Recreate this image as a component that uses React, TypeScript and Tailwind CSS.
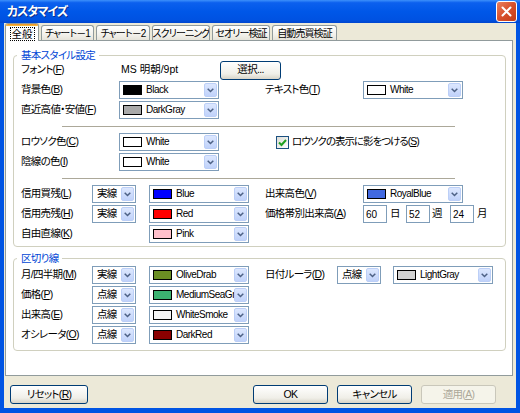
import React from "react";

function Mn({ c }: { c: string }) {
  return (
    <>
      (<span className="underline">{c}</span>)
    </>
  );
}

function Arrow() {
  return (
    <span className="flex h-full w-[13px] shrink-0 items-center justify-center rounded-[2px] border border-[#bccff7] bg-[linear-gradient(to_bottom,#dce7fe,#c0d2fa)]">
      <svg width="7" height="5" viewBox="0 0 7 5">
        <path d="M0.7 0.7 L3.5 3.5 L6.3 0.7" stroke="#4d6185" strokeWidth="1.5" fill="none" />
      </svg>
    </span>
  );
}

function Combo({ swatch, name }: { swatch: string; name: string }) {
  return (
    <div className="flex h-[18px] w-[100px] shrink-0 items-stretch border border-[#7f9db9] bg-white p-[1px]">
      <div className="flex min-w-0 flex-1 items-center overflow-hidden pl-[2px]">
        <span className={`h-[10px] w-[19px] shrink-0 border border-black ${swatch}`} />
        <span className="ml-[4px] whitespace-nowrap text-[10px] leading-none tracking-[-0.5px]">{name}</span>
      </div>
      <Arrow />
    </div>
  );
}

function LineCombo({ value }: { value: string }) {
  return (
    <div className="flex h-[18px] w-[44px] shrink-0 items-stretch border border-[#7f9db9] bg-white p-[1px]">
      <div className="flex flex-1 items-center pl-[3px]">{value}</div>
      <Arrow />
    </div>
  );
}

function NumBox({ v }: { v: string }) {
  return (
    <div className="flex h-[18px] w-[24px] shrink-0 items-center border border-[#7f9db9] bg-white pl-[2px] text-[10px] tracking-normal">
      {v}
    </div>
  );
}

function Btn({ children, w = "w-[75px]", disabled = false }: { children: React.ReactNode; w?: string; disabled?: boolean }) {
  return (
    <div
      className={`flex h-[19px] ${w} items-center justify-center rounded-[3px] border ${
        disabled
          ? "border-[#c9c7ba] bg-[#f5f4ea] text-[#aca899]"
          : "border-[#003c74] bg-[linear-gradient(to_bottom,#ffffff,#f0efe8_70%,#d8d4c8)]"
      }`}
    >
      {children}
    </div>
  );
}

function Group({ title, children, cls }: { title: string; children: React.ReactNode; cls: string }) {
  return (
    <div className={`relative ml-[7px] mr-[6px] rounded-[4px] border border-[#d0d0bf] ${cls}`}>
      <span className="absolute -top-[8px] left-[3px] bg-white px-[4px] leading-[14px] text-[#0046d5]">{title}</span>
      {children}
    </div>
  );
}

function Row({ children }: { children: React.ReactNode }) {
  return <div className="flex h-[20px] items-center">{children}</div>;
}

function Sep() {
  return (
    <div className="flex h-[12px] items-center">
      <div className="ml-[41px] w-[393px] border-t border-[#aca899]" />
    </div>
  );
}

function Tab({ label, w }: { label: string; w: string }) {
  return (
    <div
      className={`flex h-[15px] ${w} items-center justify-center overflow-hidden rounded-t-[3px] border border-b-0 border-[#919b9c] bg-[linear-gradient(to_bottom,#ffffff,#f3f2ec_60%,#e6e4da)] whitespace-nowrap text-[10px] tracking-[-0.9px]`}
    >
      {label}
    </div>
  );
}

export default function App() {
  return (
    <div className="flex h-[413px] w-[520px] flex-col bg-[#0054e3] text-[10.5px] tracking-[-0.7px] text-black [font-family:'Liberation_Sans','Noto_Sans_CJK_JP',sans-serif] [font-feature-settings:'palt']">
      {/* title bar */}
      <div className="flex h-[23px] items-center bg-[linear-gradient(to_bottom,#3d90fb_0%,#0c60ee_12%,#0057e8_50%,#0052e2_85%,#0046cf_100%)] pl-[7px] pr-[3px]">
        <span className="flex-1 text-[12px] font-bold tracking-[-1px] text-white [text-shadow:1px_1px_0_#0b2f8e]">カスタマイズ</span>
        <div className="flex h-[21px] w-[21px] items-center justify-center rounded-[3px] border border-white bg-[linear-gradient(135deg,#e9805f,#d8502c_50%,#c23c18)]">
          <svg width="11" height="11" viewBox="0 0 11 11">
            <path d="M1.5 1.5 L9.5 9.5 M9.5 1.5 L1.5 9.5" stroke="white" strokeWidth="2" strokeLinecap="round" />
          </svg>
        </div>
      </div>

      {/* body */}
      <div className="mx-[4px] flex h-[385px] flex-col bg-[#ece9d8]">
        {/* tabs */}
        <div className="flex h-[17px] items-end gap-[2px] pl-[1px]">
          <div className="relative z-10 -mb-[1px] flex h-[18px] w-[34px] flex-col rounded-t-[3px] border border-b-0 border-[#919b9c] bg-white">
            <div className="h-[2px] rounded-t-[2px] bg-[linear-gradient(to_bottom,#e68b2c,#ffc73c)]" />
            <div className="flex flex-1 items-center justify-center">
              <span className="border border-dotted border-black px-[1px] leading-[12px] tracking-normal">全般</span>
            </div>
          </div>
          <Tab label="チャート－1" w="w-[53px]" />
          <Tab label="チャート－2" w="w-[54px]" />
          <Tab label="スクリーニング" w="w-[58px]" />
          <Tab label="セオリー検証" w="w-[58px]" />
          <Tab label="自動売買検証" w="w-[65px]" />
        </div>

        {/* panel */}
        <div className="ml-[1px] mr-[3px] flex h-[336px] flex-col border border-[#919b9c] bg-white">
          <Group title="基本スタイル設定" cls="mt-[14px] px-[7px] pt-[4px] pb-[2px]">
            <Row>
              <span className="w-[98px]">フォント<Mn c="F" /></span>
              <span className="w-[101px] pl-[2px] tracking-normal">MS 明朝/9pt</span>
              <Btn w="w-[61px]">選択...</Btn>
            </Row>
            <Row>
              <span className="w-[98px]">背景色<Mn c="B" /></span>
              <Combo swatch="bg-black" name="Black" />
              <span className="ml-[46px] w-[98px]">テキスト色<Mn c="T" /></span>
              <Combo swatch="bg-white" name="White" />
            </Row>
            <Row>
              <span className="w-[98px]">直近高値・安値<Mn c="F" /></span>
              <Combo swatch="bg-[#a9a9a9]" name="DarkGray" />
            </Row>
            <Sep />
            <Row>
              <span className="w-[98px]">ロウソク色<Mn c="C" /></span>
              <Combo swatch="bg-white" name="White" />
              <span className="ml-[57px] flex h-[13px] w-[13px] items-center justify-center border border-[#1c5180] bg-[linear-gradient(135deg,#dcdcd7,#ffffff)]">
                <svg width="9" height="9" viewBox="0 0 9 9">
                  <path d="M1 4.5 L3.5 7 L8 2" stroke="#21a121" strokeWidth="2" fill="none" />
                </svg>
              </span>
              <span className="ml-[3px] tracking-[-1px]">ロウソクの表示に影をつける<Mn c="S" /></span>
            </Row>
            <Row>
              <span className="w-[98px]">陰線の色<Mn c="I" /></span>
              <Combo swatch="bg-white" name="White" />
            </Row>
            <Sep />
            <Row>
              <span className="w-[71px]">信用買残<Mn c="L" /></span>
              <LineCombo value="実線" />
              <span className="ml-[13px]" />
              <Combo swatch="bg-[#0000ff]" name="Blue" />
              <span className="ml-[16px] w-[98px]">出来高色<Mn c="V" /></span>
              <Combo swatch="bg-[#4169e1]" name="RoyalBlue" />
            </Row>
            <Row>
              <span className="w-[71px]">信用売残<Mn c="H" /></span>
              <LineCombo value="実線" />
              <span className="ml-[13px]" />
              <Combo swatch="bg-[#ff0000]" name="Red" />
              <span className="ml-[16px] w-[98px]">価格帯別出来高<Mn c="A" /></span>
              <NumBox v="60" />
              <span className="w-[19px] pl-[3px]">日</span>
              <NumBox v="52" />
              <span className="w-[20px] pl-[2px]">週</span>
              <NumBox v="24" />
              <span className="pl-[3px]">月</span>
            </Row>
            <Row>
              <span className="w-[71px]">自由直線<Mn c="K" /></span>
              <span className="ml-[57px]" />
              <Combo swatch="bg-[#ffc0cb]" name="Pink" />
            </Row>
          </Group>

          <Group title="区切り線" cls="mt-[11px] px-[7px] pt-[6px] pb-[5px]">
            <Row>
              <span className="w-[71px]">月/四半期<Mn c="M" /></span>
              <LineCombo value="実線" />
              <span className="ml-[13px]" />
              <Combo swatch="bg-[#6b8e23]" name="OliveDrab" />
              <span className="ml-[16px] w-[72px]">日付ルーラ<Mn c="D" /></span>
              <LineCombo value="点線" />
              <span className="ml-[12px]" />
              <Combo swatch="bg-[#d3d3d3]" name="LightGray" />
            </Row>
            <Row>
              <span className="w-[71px]">価格<Mn c="P" /></span>
              <LineCombo value="点線" />
              <span className="ml-[13px]" />
              <Combo swatch="bg-[#3cb371]" name="MediumSeaGr" />
            </Row>
            <Row>
              <span className="w-[71px]">出来高<Mn c="E" /></span>
              <LineCombo value="点線" />
              <span className="ml-[13px]" />
              <Combo swatch="bg-[#f5f5f5]" name="WhiteSmoke" />
            </Row>
            <Row>
              <span className="w-[71px]">オシレータ<Mn c="O" /></span>
              <LineCombo value="点線" />
              <span className="ml-[13px]" />
              <Combo swatch="bg-[#8b0000]" name="DarkRed" />
            </Row>
          </Group>
        </div>

        {/* bottom buttons */}
        <div className="flex flex-1 items-start pt-[9px] pl-[6px] pr-[20px]">
          <Btn w="w-[78px]">リセット<Mn c="R" /></Btn>
          <div className="flex-1" />
          <div className="flex gap-[9px]">
            <Btn>OK</Btn>
            <Btn>キャンセル</Btn>
            <Btn disabled>適用<Mn c="A" /></Btn>
          </div>
        </div>
      </div>
    </div>
  );
}
